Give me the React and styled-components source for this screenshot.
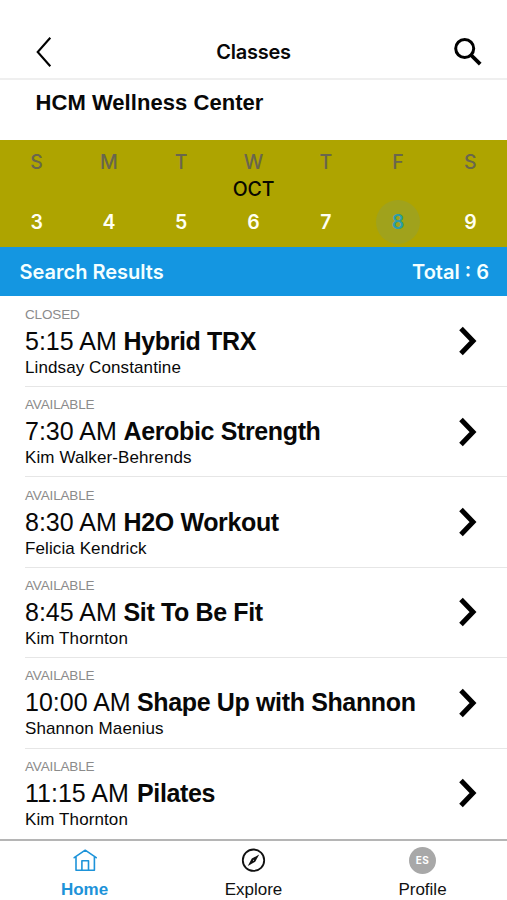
import React from 'react';
import styled, { createGlobalStyle } from 'styled-components';

const GlobalStyle = createGlobalStyle`
  * { box-sizing: border-box; }
  body { margin: 0; background: #fff; }
`;

const ui = `Inter, "Liberation Sans", sans-serif`;
const body = `"Liberation Sans", Arial, sans-serif`;

const Screen = styled.main`
  display: flex;
  flex-direction: column;
  width: 507px;
  height: 900px;
  overflow: hidden;
  background: #fff;
  color: #080808;
  font-family: ${body};
`;

const Header = styled.header`
  display: grid;
  grid-template-columns: 1fr auto 1fr;
  align-items: center;
  flex: none;
  height: 80px;
  padding: 26px 24px 0;
  border-bottom: 2px solid #efefef;
`;

const IconButton = styled.button`
  display: flex;
  justify-self: ${(p) => p.$side};
  padding: 0;
  margin-left: ${(p) => (p.$side === 'start' ? 11 : 0)}px;
  border: 0;
  background: none;
  color: #000;
`;

const Title = styled.h1`
  margin: 0;
  font: 600 20px/24px ${ui};
  letter-spacing: -0.25px;
`;

const Location = styled.h2`
  flex: none;
  height: 60px;
  margin: 0;
  padding: 10px 35.5px 0;
  font: 700 22px/26px ${body};
  letter-spacing: 0.05px;
`;

const Week = styled.section`
  display: grid;
  grid-template-columns: repeat(7, 72.3px);
  justify-content: center;
  flex: none;
  height: 107px;
  background: #aea400;
`;

const Day = styled.div`
  display: grid;
  grid-template-rows: 34px 20px 45px;
  justify-items: center;
  align-items: center;
  padding-top: 5px;
  font: 500 19.5px/24px ${ui};
`;

const Weekday = styled.span`
  color: #69664d;
`;

const Month = styled.span`
  color: #080800;
  letter-spacing: -0.1px;
`;

const DateNumber = styled.span`
  display: grid;
  place-items: center;
  width: 44px;
  height: 44px;
  border-radius: 50%;
  font-weight: 600;
  background: ${(p) => (p.$selected ? '#a0a21c' : 'transparent')};
  color: ${(p) => (p.$selected ? '#2c9da9' : '#fffff2')};
`;

const ResultsBar = styled.div`
  display: flex;
  justify-content: space-between;
  align-items: center;
  flex: none;
  height: 49px;
  padding: 1px 18px 0 19.5px;
  background: #1496e1;
  color: #f4ffff;
  font: 600 20px/24px ${ui};
`;

const ClassList = styled.ul`
  flex: 1;
  min-height: 0;
  margin: 0;
  padding: 0.6px 0 0 25px;
  overflow: hidden;
  list-style: none;
`;

const ClassRow = styled.li`
  display: flex;
  justify-content: space-between;
  align-items: center;
  height: 90.4px;
  padding-right: 29px;
  border-bottom: 1px solid #e6e6e6;

  &:last-child { border-bottom-color: transparent; }
`;

const Status = styled.div`
  height: 19px;
  color: #8b8b8b;
  font-size: 13.5px;
  line-height: 19px;
  letter-spacing: -0.15px;
`;

const ClassTitle = styled.div`
  height: 34px;
  font-size: 25px;
  line-height: 34px;
  white-space: nowrap;
`;

const Time = styled.span`
  display: inline-block;
  width: ${(p) => (p.$wide ? 112 : 98.5)}px;
`;

const ClassName = styled.b`
  letter-spacing: -0.36px;
`;

const Instructor = styled.div`
  height: 20px;
  font-size: 17px;
  line-height: 20px;
  letter-spacing: 0.1px;
`;

const Tabs = styled.nav`
  display: grid;
  grid-template-columns: repeat(3, 1fr);
  flex: none;
  height: 61.5px;
  border-top: 2px solid #b5b5b5;
`;

const Tab = styled.a`
  display: flex;
  flex-direction: column;
  align-items: center;
  gap: 6px;
  padding-top: 6px;
  color: ${(p) => (p.$active ? '#1d93d9' : '#111')};
  font: ${(p) => (p.$active ? 700 : 400)} 17px/20px ${body};
`;

const Avatar = styled.i`
  display: grid;
  place-items: center;
  width: 27px;
  height: 27px;
  border-radius: 50%;
  background: #a8a8a8;
  color: #fff;
  font: 700 10px/12px ${ui};
  letter-spacing: 0.4px;
`;

const days = [['S', 3], ['M', 4], ['T', 5], ['W', 6], ['T', 7], ['F', 8], ['S', 9]];

const classes = [
  ['CLOSED', '5:15 AM', 'Hybrid TRX', 'Lindsay Constantine'],
  ['AVAILABLE', '7:30 AM', 'Aerobic Strength', 'Kim Walker-Behrends'],
  ['AVAILABLE', '8:30 AM', 'H2O Workout', 'Felicia Kendrick'],
  ['AVAILABLE', '8:45 AM', 'Sit To Be Fit', 'Kim Thornton'],
  ['AVAILABLE', '10:00 AM', 'Shape Up with Shannon', 'Shannon Maenius'],
  ['AVAILABLE', '11:15 AM', 'Pilates', 'Kim Thornton'],
];

const BackIcon = () => (
  <svg width="18" height="32" viewBox="0 0 18 32" fill="none" stroke="currentColor" strokeWidth="2.1">
    <path d="M15.3 1.8 2.7 16l12.6 14.2" />
  </svg>
);

const SearchIcon = () => (
  <svg width="30" height="30" viewBox="0 0 30 30" fill="none" stroke="currentColor">
    <circle cx="11.7" cy="11.5" r="9" strokeWidth="3" />
    <path d="m18 18 9.2 9.2" strokeWidth="3.8" />
  </svg>
);

const Chevron = () => (
  <svg width="20" height="32" viewBox="0 0 20 32" fill="none" stroke="#000" strokeWidth="5">
    <path d="m3 3.5 12 12.5L3 28.5" />
  </svg>
);

const HomeIcon = () => (
  <svg width="27" height="27" viewBox="0 0 27 27" fill="none" stroke="currentColor" strokeWidth="1.6" strokeLinejoin="round" strokeLinecap="round">
    <path d="M3.2 10.7 14.2 3.2l11 7.5M5 10v13.2h18.4V10M10.9 23v-9.2h6.6V23" />
  </svg>
);

const CompassIcon = () => (
  <svg width="27" height="27" viewBox="0 0 27 27">
    <circle cx="13.5" cy="13.2" r="10.7" fill="none" stroke="currentColor" strokeWidth="1.8" />
    <path d="m19.2 7.5-4 7.3-7.4 4.1 4-7.3z" fill="currentColor" />
    <circle cx="13.5" cy="13.2" r="0.5" fill="#fff" />
  </svg>
);

export default function App() {
  return (
    <Screen>
      <GlobalStyle />
      <Header>
        <IconButton $side="start" aria-label="Back"><BackIcon /></IconButton>
        <Title>Classes</Title>
        <IconButton $side="end" aria-label="Search"><SearchIcon /></IconButton>
      </Header>
      <Location>HCM Wellness Center</Location>
      <Week>
        {days.map(([name, date]) => (
          <Day key={date}>
            <Weekday>{name}</Weekday>
            <Month>{date === 6 ? 'OCT' : ''}</Month>
            <DateNumber $selected={date === 8}>{date}</DateNumber>
          </Day>
        ))}
      </Week>
      <ResultsBar>
        <span>Search Results</span>
        <span>Total : 6</span>
      </ResultsBar>
      <ClassList>
        {classes.map(([status, time, name, instructor]) => (
          <ClassRow key={time}>
            <div>
              <Status>{status}</Status>
              <ClassTitle>
                <Time $wide={time.length > 7}>{time}</Time>
                <ClassName>{name}</ClassName>
              </ClassTitle>
              <Instructor>{instructor}</Instructor>
            </div>
            <Chevron />
          </ClassRow>
        ))}
      </ClassList>
      <Tabs>
        <Tab $active><HomeIcon />Home</Tab>
        <Tab><CompassIcon />Explore</Tab>
        <Tab><Avatar>ES</Avatar>Profile</Tab>
      </Tabs>
    </Screen>
  );
}
